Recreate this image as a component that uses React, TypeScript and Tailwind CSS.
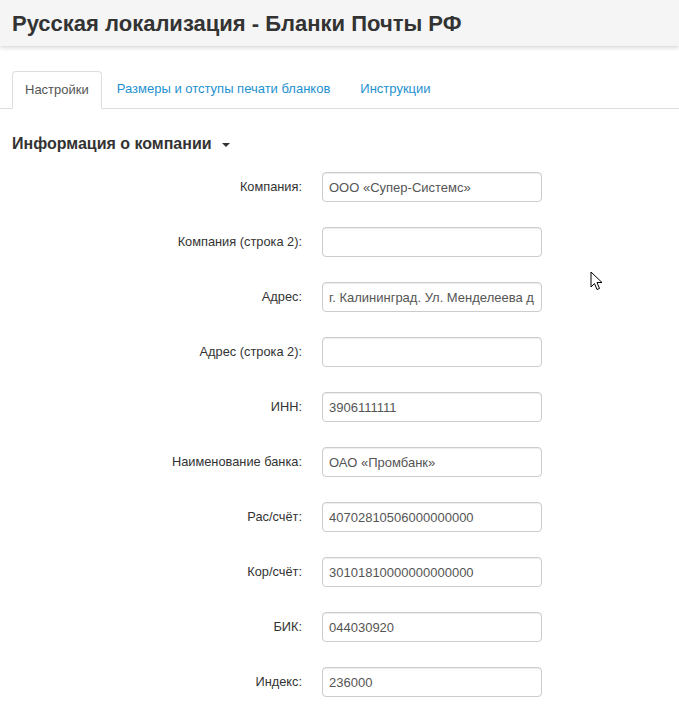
import React from "react";

const fields: Array<readonly [string, string]> = [
  ["Компания:", "ООО «Супер-Системс»"],
  ["Компания (строка 2):", ""],
  ["Адрес:", "г. Калининград. Ул. Менделеева д. 1"],
  ["Адрес (строка 2):", ""],
  ["ИНН:", "3906111111"],
  ["Наименование банка:", "ОАО «Промбанк»"],
  ["Рас/счёт:", "40702810506000000000"],
  ["Кор/счёт:", "30101810000000000000"],
  ["БИК:", "044030920"],
  ["Индекс:", "236000"],
];

const tabs = ["Настройки", "Размеры и отступы печати бланков", "Инструкции"];

export default function App() {
  return (
    <div className="relative min-h-[714px] w-[679px] overflow-hidden bg-white font-['Liberation_Sans',Arial,sans-serif] text-[#333]">
      <header className="flex h-[46px] items-center bg-[#f5f5f5] px-3 shadow-[0_2px_4px_rgba(0,0,0,0.15)]">
        <h1 className="text-[22px] font-bold text-[#333]">
          Русская локализация - Бланки Почты РФ
        </h1>
      </header>

      <nav className="mt-[25px] flex border-b border-[#ddd] pl-3">
        {tabs.map((tab, i) =>
          i === 0 ? (
            <span
              key={tab}
              className="-mb-px rounded-t border border-[#ddd] border-b-white bg-white px-[12px] py-[10px] text-[13px] leading-4 text-[#555]"
            >
              {tab}
            </span>
          ) : (
            <span
              key={tab}
              className="px-[15px] py-[10px] text-[13px] leading-4 text-[#1e91cf]"
            >
              {tab}
            </span>
          )
        )}
      </nav>

      <h2 className="mt-[25px] flex items-center px-3 text-[16px] font-bold leading-5 text-[#333]">
        Информация о компании
        <span className="ml-[10px] mt-[2px] h-0 w-0 border-x-[4px] border-t-[4px] border-x-transparent border-t-[#333]" />
      </h2>

      <div className="mt-[18px] flex flex-col gap-[25px]">
        {fields.map(([label, value]) => (
          <div key={label} className="flex items-center gap-5">
            <label className="w-[302px] text-right text-[12.8px] text-[#333]">
              {label}
            </label>
            <input
              readOnly
              value={value}
              className="h-[30px] w-[220px] rounded border border-[#ccc] bg-white px-[6px] text-[13px] text-[#555] shadow-[inset_0_1px_1px_rgba(0,0,0,0.075)] outline-none"
            />
          </div>
        ))}
      </div>

      <svg
        className="absolute left-[590px] top-[271px]"
        width="14"
        height="21"
        viewBox="0 0 14 21"
      >
        <path
          d="M1 1 L1 16 L4.5 12.5 L7 18.5 L9.5 17.5 L7 11.5 L12 11.5 Z"
          fill="white"
          stroke="black"
          strokeWidth="1"
          strokeLinejoin="miter"
        />
      </svg>
    </div>
  );
}
